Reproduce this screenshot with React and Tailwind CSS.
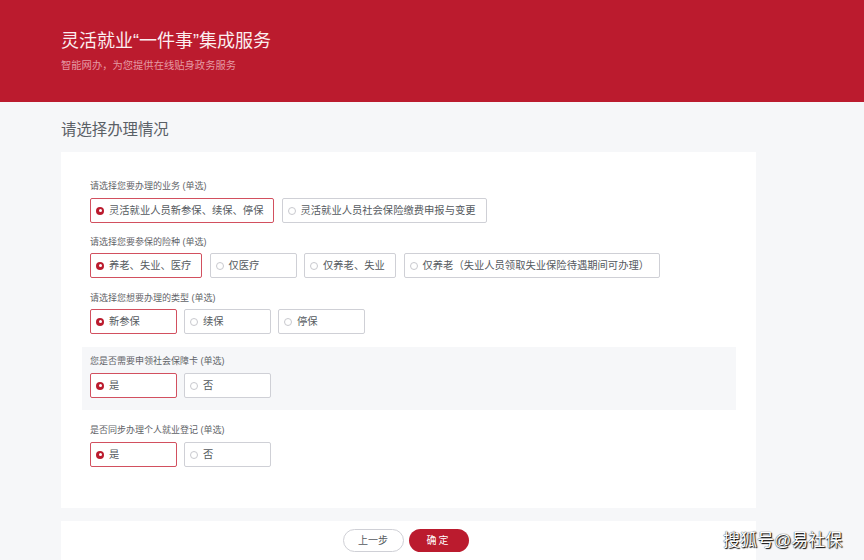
function Option({ label, selected, width }) {
  return (
    <div
      className={`flex h-[25px] items-center rounded-[2px] border bg-white pl-[5px] ${width} ${
        selected ? "border-[#d2505f]" : "border-[#cfd0d6]"
      }`}
    >
      {selected ? (
        <span className="flex h-[8px] w-[8px] shrink-0 items-center justify-center rounded-full bg-[#bb1b2e]">
          <span className="h-[3px] w-[3px] rounded-full bg-white" />
        </span>
      ) : (
        <span className="h-[8px] w-[8px] shrink-0 rounded-full border border-[#c8c9ce] bg-white" />
      )}
      <span className="ml-[5px] whitespace-nowrap pt-[2px] text-[10.3px] leading-none text-[#555a60]">{label}</span>
    </div>
  );
}

function Group({ title, options, className = "", gapTop = "mt-[5.5px]" }) {
  return (
    <div className={className}>
      <div className="text-[9px] leading-[12px] text-[#5f6368]">{title}</div>
      <div className={`${gapTop} flex gap-[7.5px]`}>
        {options.map((o) => (
          <Option key={o.label} {...o} />
        ))}
      </div>
    </div>
  );
}

export default function App() {
  return (
    <div className="relative h-[560px] w-[864px] overflow-hidden bg-[#f6f7f9] font-['Liberation_Sans','Noto_Sans_CJK_SC',sans-serif]">
      <header className="flex h-[102px] flex-col bg-[#bb1b2e] pl-[61px] pt-[30px]">
        <h1 className="text-[18px] font-normal leading-[22px] text-[#fbeef0]">灵活就业“一件事”集成服务</h1>
        <p className="mt-[7px] text-[10.3px] leading-[14px] text-[#e59aa4]">智能网办，为您提供在线贴身政务服务</p>
      </header>

      <main className="pl-[61px] pr-[108px]">
        <h2 className="pt-[18px] text-[15.4px] font-normal leading-[20px] text-[#5a6066]">请选择办理情况</h2>

        <section className="mt-[12px] h-[356px] bg-white pl-[21px] pr-[20px] pt-[27.5px]">
          <div className="pl-[8px]">
            <Group
              gapTop="mt-[6.5px]"
              title="请选择您要办理的业务 (单选)"
              options={[
                { label: "灵活就业人员新参保、续保、停保", selected: true, width: "w-[184px]" },
                { label: "灵活就业人员社会保险缴费申报与变更", width: "w-[205px]" },
              ]}
            />
            <Group
              className="mt-[12.5px]"
              title="请选择您要参保的险种 (单选)"
              options={[
                { label: "养老、失业、医疗", selected: true, width: "w-[112px]" },
                { label: "仅医疗", width: "w-[87px]" },
                { label: "仅养老、失业", width: "w-[92px]" },
                { label: "仅养老（失业人员领取失业保险待遇期间可办理）", width: "w-[256px]" },
              ]}
            />
            <Group
              className="mt-[13.5px]"
              title="请选择您想要办理的类型 (单选)"
              options={[
                { label: "新参保", selected: true, width: "w-[86.5px]" },
                { label: "续保", width: "w-[86.5px]" },
                { label: "停保", width: "w-[86.5px]" },
              ]}
            />
          </div>

          <div className="mt-[13px] h-[63px] bg-[#f6f7f9] pl-[8px] pt-[8px]">
            <Group
              gapTop="mt-[6px]"
              title="您是否需要申领社会保障卡 (单选)"
              options={[
                { label: "是", selected: true, width: "w-[86.5px]" },
                { label: "否", width: "w-[86.5px]" },
              ]}
            />
          </div>

          <div className="pl-[8px] pt-[14px]">
            <Group
              gapTop="mt-[6px]"
              title="是否同步办理个人就业登记 (单选)"
              options={[
                { label: "是", selected: true, width: "w-[86.5px]" },
                { label: "否", width: "w-[86.5px]" },
              ]}
            />
          </div>
        </section>

        <footer className="mt-[13px] flex h-[39px] justify-center gap-[5px] bg-white pr-[6px] pt-[8px]">
          <button className="h-[23px] w-[61px] rounded-full border border-[#cfd0d6] bg-white pt-[1px] text-[10px] leading-none text-[#555a60]">
            上一步
          </button>
          <button className="h-[23px] w-[60px] rounded-full bg-[#bb1b2e] pt-[1px] text-[10px] leading-none tracking-[2px] text-white">
            确定
          </button>
        </footer>
      </main>

      <div className="absolute left-[723px] top-[530px] whitespace-nowrap text-[17px] leading-[22px] text-white [text-shadow:0_0_1px_#000,1px_1px_1px_#000]">
        搜狐号@易社保
      </div>
    </div>
  );
}
